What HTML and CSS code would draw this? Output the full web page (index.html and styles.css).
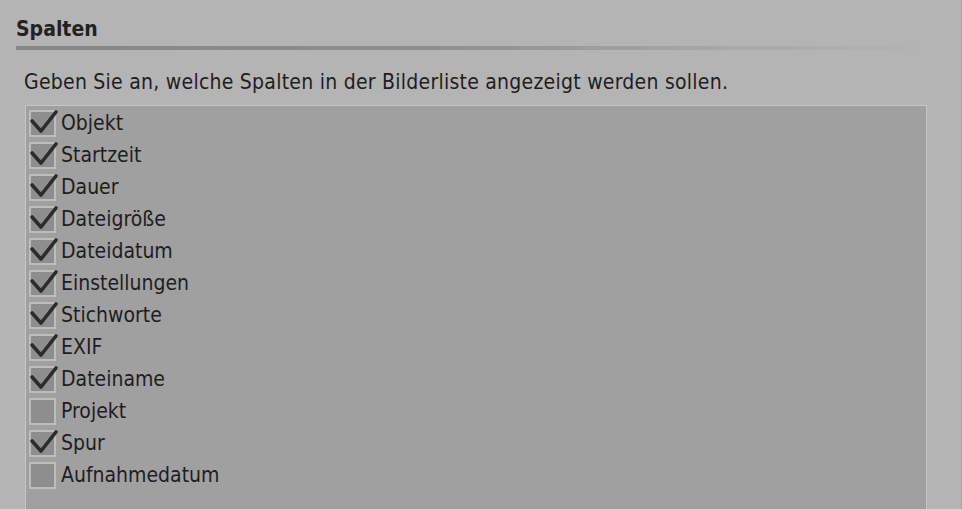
FILE: index.html
```html
<!DOCTYPE html>
<html lang="de">
<head>
<meta charset="utf-8">
<link rel="stylesheet" href="styles.css">
</head>
<body>
<div class="page">
  <h2 class="title">Spalten</h2>
  <div class="rule"></div>
  <p class="intro">Geben Sie an, welche Spalten in der Bilderliste angezeigt werden sollen.</p>
  <div class="list">
    <div class="row"><span class="box on"><svg viewBox="0 0 28 28"><path d="M3 11 L12 21 L27 2"/></svg></span><span class="label">Objekt</span></div>
    <div class="row"><span class="box on"><svg viewBox="0 0 28 28"><path d="M3 11 L12 21 L27 2"/></svg></span><span class="label">Startzeit</span></div>
    <div class="row"><span class="box on"><svg viewBox="0 0 28 28"><path d="M3 11 L12 21 L27 2"/></svg></span><span class="label">Dauer</span></div>
    <div class="row"><span class="box on"><svg viewBox="0 0 28 28"><path d="M3 11 L12 21 L27 2"/></svg></span><span class="label">Dateigröße</span></div>
    <div class="row"><span class="box on"><svg viewBox="0 0 28 28"><path d="M3 11 L12 21 L27 2"/></svg></span><span class="label">Dateidatum</span></div>
    <div class="row"><span class="box on"><svg viewBox="0 0 28 28"><path d="M3 11 L12 21 L27 2"/></svg></span><span class="label">Einstellungen</span></div>
    <div class="row"><span class="box on"><svg viewBox="0 0 28 28"><path d="M3 11 L12 21 L27 2"/></svg></span><span class="label">Stichworte</span></div>
    <div class="row"><span class="box on"><svg viewBox="0 0 28 28"><path d="M3 11 L12 21 L27 2"/></svg></span><span class="label">EXIF</span></div>
    <div class="row"><span class="box on"><svg viewBox="0 0 28 28"><path d="M3 11 L12 21 L27 2"/></svg></span><span class="label">Dateiname</span></div>
    <div class="row"><span class="box"></span><span class="label">Projekt</span></div>
    <div class="row"><span class="box on"><svg viewBox="0 0 28 28"><path d="M3 11 L12 21 L27 2"/></svg></span><span class="label">Spur</span></div>
    <div class="row"><span class="box"></span><span class="label">Aufnahmedatum</span></div>
  </div>
</div>
</body>
</html>
```

FILE: styles.css
```css
html, body {
  margin: 0;
  padding: 0;
  background: #b4b4b4;
  overflow: hidden;
}
.page {
  width: 961px;
  height: 509px;
  border-right: 1px solid #a4a4a4;
  font-family: "DejaVu Sans Condensed", "DejaVu Sans", Verdana, sans-serif;
  font-stretch: condensed;
  color: #1c1c1c;
}
.title {
  margin: 0;
  padding: 16px 0 0 16px;
  font-size: 21px;
  line-height: 26px;
  font-weight: bold;
  color: #222;
}
.rule {
  margin: 4px 30px 0 16px;
  height: 4px;
  background: linear-gradient(to right, #868686 0%, #8e8e8e 45%, #a6a6a6 75%, #b4b4b4 100%);
}
.intro {
  margin: 19px 0 0 24px;
  font-size: 21px;
  line-height: 26px;
  letter-spacing: 0.25px;
  color: #1e1e1e;
}
.list {
  margin: 10px 0 0 25px;
  width: 902px;
  height: 420px;
  background: #a0a0a0;
  border: 1px solid #c6c6c6;
  border-bottom: none;
  padding: 1px 0 0 3px;
  box-sizing: border-box;
}
.row {
  display: flex;
  align-items: center;
  height: 32px;
  gap: 5px;
}
.box {
  width: 27px;
  height: 27px;
  box-sizing: border-box;
  border: 2px solid #bdbdbd;
  background: #8e8e8e;
  position: relative;
  flex: none;
}
.box svg {
  position: absolute;
  left: -2px;
  top: -2px;
  width: 28px;
  height: 28px;
  overflow: visible;
}
.box svg path {
  fill: none;
  stroke: #2c2c2c;
  stroke-width: 3.6;
  stroke-linecap: round;
  stroke-linejoin: round;
}
.label {
  font-size: 21px;
  line-height: 26px;
  color: #1e1e1e;
}
```
